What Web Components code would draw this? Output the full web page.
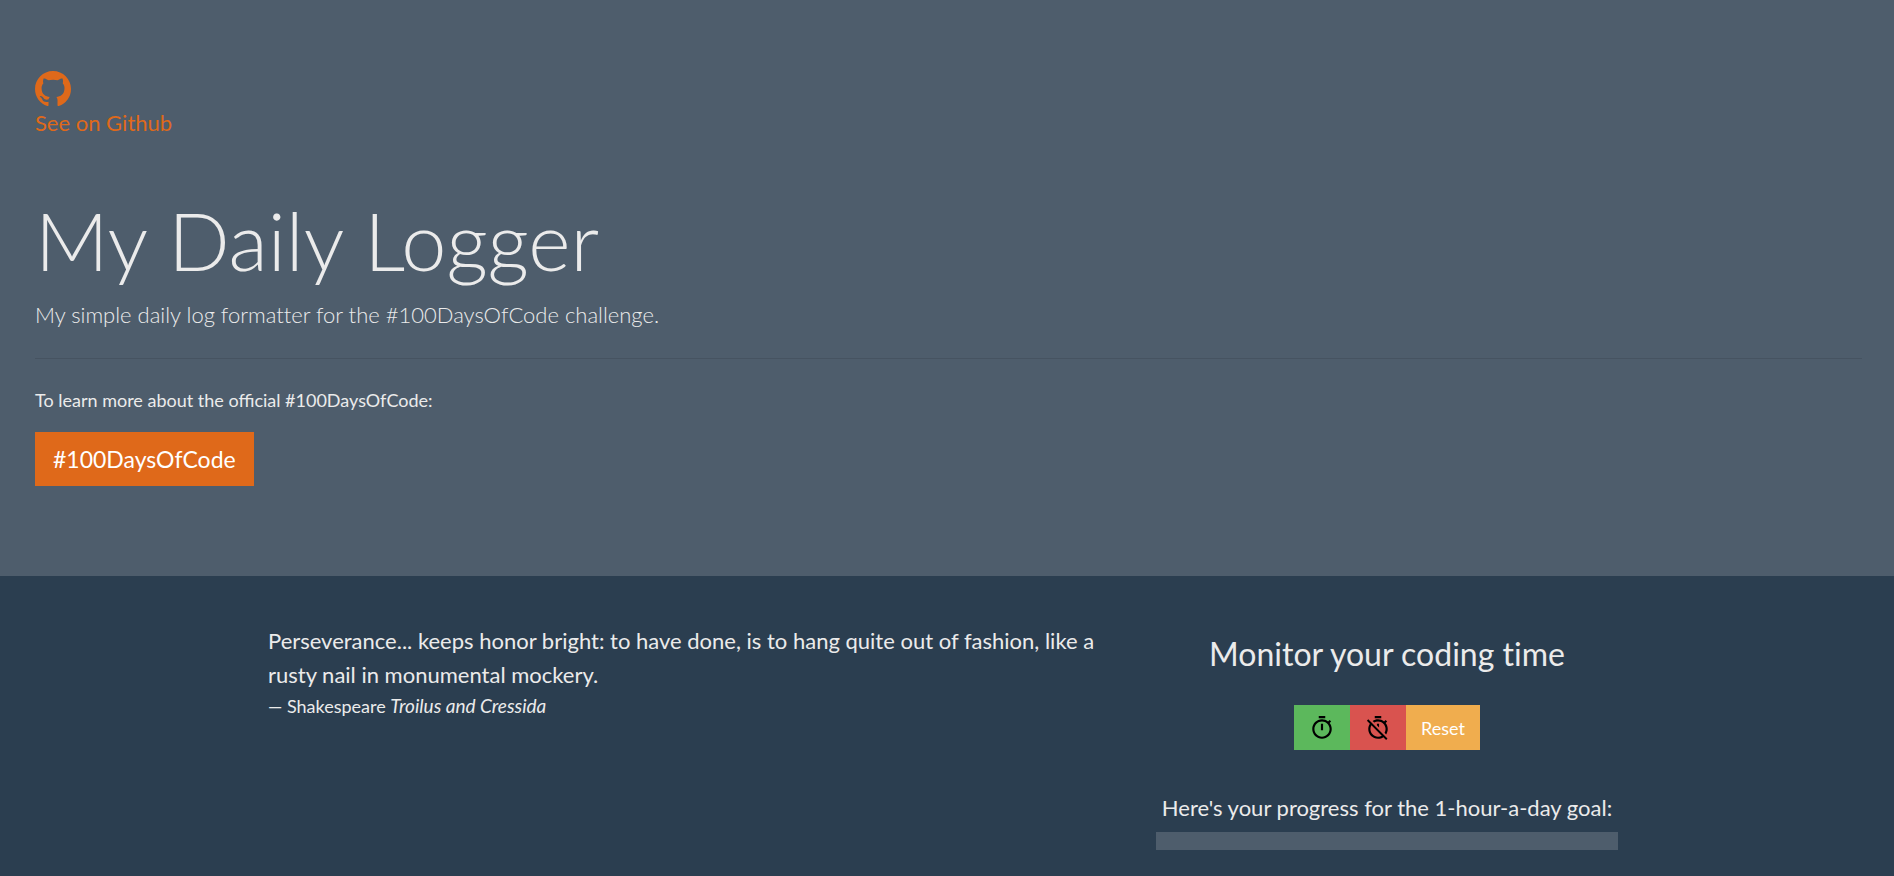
<!DOCTYPE html>
<html lang="en">
<head>
<meta charset="utf-8">
<meta name="viewport" content="width=device-width, initial-scale=1">
<title>My Daily Logger</title>
<style>
  body {
    margin: 0;
    background: #2b3e50;
    color: #ebebeb;
    font: 400 18px/26px Lato, "Liberation Sans", sans-serif;
    font-variant-ligatures: none;
  }
</style>
</head>
<body>
<daily-logger></daily-logger>

<template id="daily-logger">
  <style>
    :host { display: block; }
    main {
      box-sizing: border-box;
      max-width: 1414px;
      margin: 0 auto;
      padding: 48px 36px 24px 28px;
      display: flex;
      flex-wrap: wrap;
      justify-content: space-between;
      gap: 32px 48px;
    }
    daily-quote { flex: 1 1 400px; }
  </style>
  <page-banner>
    <github-link slot="top" href="https://github.com/">See on Github</github-link>
    <span slot="title">My Daily Logger</span>
    <span slot="lead">My simple daily log formatter for the #100DaysOfCode challenge.</span>
    <span slot="note">To learn more about the official #100DaysOfCode:</span>
    <link-button slot="action" href="https://www.100daysofcode.com/">#100DaysOfCode</link-button>
  </page-banner>
  <main>
    <daily-quote>
      Perseverance... keeps honor bright: to have done, is to hang quite out of fashion, like a rusty nail in monumental mockery.
      <span slot="author">Shakespeare</span>
      <span slot="work">Troilus and Cressida</span>
    </daily-quote>
    <coding-timer></coding-timer>
  </main>
</template>

<template id="page-banner">
  <style>
    :host { display: block; background: #4e5d6c; padding: 71px 32px 90px 35px; }
    h1 { margin: 57px 0 14px; font-size: 81px; line-height: 88px; font-weight: 300; }
    .lead { margin: 0; font-size: 22px; line-height: 34px; font-weight: 300; }
    hr { margin: 26px 0 28px; border: 0; border-top: 1px solid rgba(0, 0, 0, .1); }
    .note { margin: 0 0 19px; font-variant-ligatures: normal; }
  </style>
  <slot name="top"></slot>
  <h1><slot name="title"></slot></h1>
  <p class="lead"><slot name="lead"></slot></p>
  <hr>
  <p class="note"><slot name="note"></slot></p>
  <slot name="action"></slot>
</template>

<template id="github-link">
  <style>
    :host { display: block; font-size: 22px; line-height: 32px; }
    a { display: inline-block; color: #df691a; text-decoration: none; }
    svg { display: block; width: 36px; height: 36px; fill: currentColor; }
  </style>
  <a>
    <svg viewBox="0 0 16 16" aria-hidden="true"><path d="M8 0C3.58 0 0 3.58 0 8c0 3.54 2.29 6.53 5.47 7.59.4.07.55-.17.55-.38 0-.19-.01-.82-.01-1.49-2.01.37-2.53-.49-2.69-.94-.09-.23-.48-.94-.82-1.13-.28-.15-.68-.52-.01-.53.63-.01 1.08.58 1.23.82.72 1.21 1.87.87 2.33.66.07-.52.28-.87.51-1.07-1.78-.2-3.64-.89-3.64-3.95 0-.87.31-1.59.82-2.15-.08-.2-.36-1.02.08-2.12 0 0 .67-.21 2.2.82.64-.18 1.32-.27 2-.27s1.36.09 2 .27c1.53-1.04 2.2-.82 2.2-.82.44 1.1.16 1.92.08 2.12.51.56.82 1.27.82 2.15 0 3.07-1.87 3.75-3.65 3.95.29.25.54.73.54 1.48 0 1.07-.01 1.93-.01 2.2 0 .21.15.46.55.38A8.01 8.01 0 0 0 16 8c0-4.42-3.58-8-8-8z"/></svg>
    <slot></slot>
  </a>
</template>

<template id="link-button">
  <style>
    :host { display: block; }
    a { display: inline-block; padding: 10px 18px; background: #df691a; color: #fff; font-size: 23px; line-height: 34px; text-decoration: none; }
  </style>
  <a><slot></slot></a>
</template>

<template id="daily-quote">
  <style>
    :host { display: block; }
    blockquote { margin: 0; font-size: 22px; line-height: 34px; }
    p { margin: 0; }
    footer { font-size: 18px; line-height: 28px; }
    cite { font-size: 19px; }
  </style>
  <blockquote>
    <p><slot></slot></p>
    <footer>— <slot name="author"></slot> <cite><slot name="work"></slot></cite></footer>
  </blockquote>
</template>

<template id="coding-timer">
  <style>
    :host { display: block; min-width: 462px; text-align: center; }
    h2 { margin: 12px 0 33px; font-size: 32px; line-height: 36px; font-weight: 400; }
    .buttons { display: flex; justify-content: center; }
    label { display: block; margin: 41px 0 7px; font-size: 22px; line-height: 34px; }
    progress { appearance: none; display: block; width: 100%; height: 18px; border: 0; background: #4e5d6c; }
    progress::-webkit-progress-bar { background: #4e5d6c; }
    progress::-webkit-progress-value { background: #df691a; }
  </style>
  <h2>Monitor your coding time</h2>
  <div class="buttons">
    <timer-button color="#5cb85c" label="Start"><svg width="24" height="24" viewBox="0 0 24 24" aria-hidden="true"><path d="M15 1H9v2h6V1zm-4 13h2V8h-2v6zm8.03-6.61l1.42-1.42c-.43-.51-.9-.99-1.41-1.41l-1.42 1.42C16.07 4.74 14.12 4 12 4c-4.97 0-9 4.03-9 9s4.02 9 9 9 9-4.03 9-9c0-2.12-.74-4.07-1.97-5.61zM12 20c-3.87 0-7-3.13-7-7s3.13-7 7-7 7 3.13 7 7-3.13 7-7 7z"/></svg></timer-button>
    <timer-button color="#d9534f" label="Stop"><svg width="24" height="24" viewBox="0 0 24 24" aria-hidden="true"><path d="M19.04 4.55l-1.42 1.42C16.07 4.74 14.12 4 12 4c-1.83 0-3.53.55-4.95 1.48l1.46 1.46C9.53 6.35 10.73 6 12 6c3.87 0 7 3.13 7 7 0 1.27-.35 2.47-.94 3.49l1.45 1.45C20.45 16.53 21 14.83 21 13c0-2.12-.74-4.07-1.97-5.61l1.42-1.42-1.41-1.42zM15 1H9v2h6V1zm-4 8.44l2 2V8h-2v1.44zM3.02 4L1.75 5.27 4.5 8.03C3.55 9.45 3 11.16 3 13c0 4.97 4.02 9 9 9 1.84 0 3.55-.55 4.98-1.5l2.5 2.5 1.27-1.27-7.71-7.71L3.02 4zM12 20c-3.87 0-7-3.13-7-7 0-1.28.35-2.48.95-3.52l9.56 9.56c-1.03.61-2.23.96-3.51.96z"/></svg></timer-button>
    <timer-button color="#f0ad4e">Reset</timer-button>
  </div>
  <label for="goal">Here's your progress for the 1-hour-a-day goal:</label>
  <progress id="goal" max="60" value="0"></progress>
</template>

<template id="timer-button">
  <style>
    :host { display: block; }
    button { display: flex; align-items: center; height: 45px; padding: 0 15px; border: 0; background: var(--fill); color: #fff; font: inherit; cursor: pointer; }
    ::slotted(svg) { display: block; width: 26px; height: 26px; fill: #000; }
  </style>
  <button type="button"><slot></slot></button>
</template>

<script>
  class TemplateElement extends HTMLElement {
    constructor() {
      super();
      const template = document.getElementById(this.localName);
      this.attachShadow({ mode: "open" }).append(template.content.cloneNode(true));
    }
  }

  class LinkElement extends TemplateElement {
    connectedCallback() {
      this.shadowRoot.querySelector("a").href = this.getAttribute("href");
    }
  }

  class TimerButton extends TemplateElement {
    connectedCallback() {
      const button = this.shadowRoot.querySelector("button");
      button.style.setProperty("--fill", this.getAttribute("color"));
      if (this.hasAttribute("label")) button.setAttribute("aria-label", this.getAttribute("label"));
    }
  }

  customElements.define("github-link", class extends LinkElement {});
  customElements.define("link-button", class extends LinkElement {});
  customElements.define("timer-button", TimerButton);
  customElements.define("daily-quote", class extends TemplateElement {});
  customElements.define("coding-timer", class extends TemplateElement {});
  customElements.define("page-banner", class extends TemplateElement {});
  customElements.define("daily-logger", class extends TemplateElement {});
</script>
</body>
</html>
